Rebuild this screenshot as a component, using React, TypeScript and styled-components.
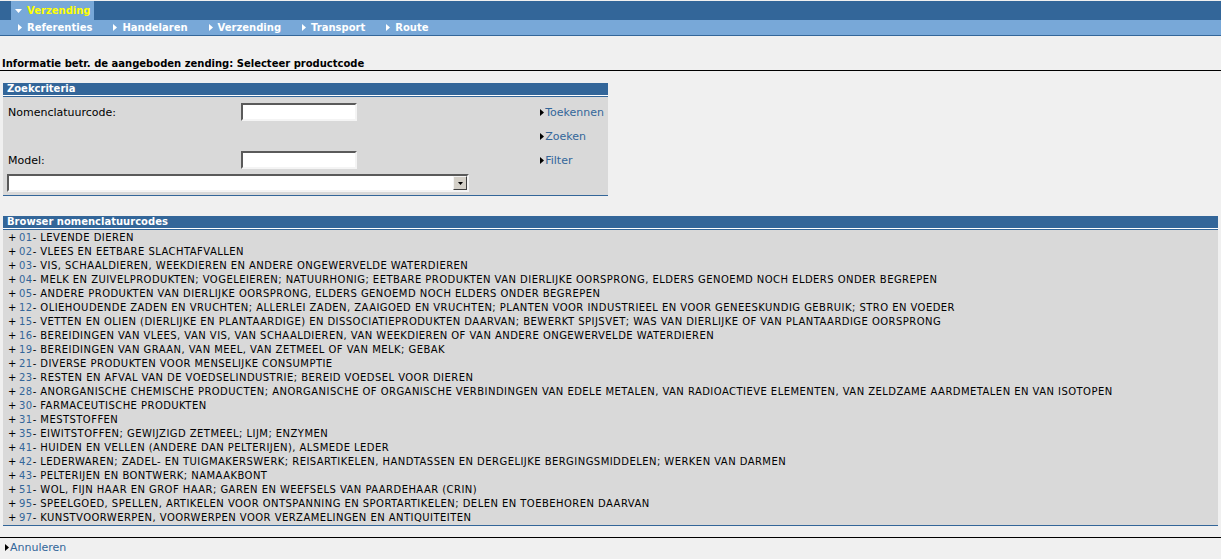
import React, { FC } from 'react';
import styled, { createGlobalStyle } from 'styled-components';

const GlobalStyle = createGlobalStyle`
	html, body {
		margin: 0;
		padding: 0;
		background: #f0f0f0;
		font-family: 'DejaVu Sans', Verdana, sans-serif;
		font-size: 11px;
		color: #000;
	}
`;

const blue = '#336699';
const lightBlue = '#78a8d8';

type Chapter = { code: string; label: string };

const chapters: Chapter[] = [
	{ code: '01', label: 'LEVENDE DIEREN' },
	{ code: '02', label: 'VLEES EN EETBARE SLACHTAFVALLEN' },
	{ code: '03', label: 'VIS, SCHAALDIEREN, WEEKDIEREN EN ANDERE ONGEWERVELDE WATERDIEREN' },
	{
		code: '04',
		label:
			'MELK EN ZUIVELPRODUKTEN; VOGELEIEREN; NATUURHONIG; EETBARE PRODUKTEN VAN DIERLIJKE OORSPRONG, ELDERS GENOEMD NOCH ELDERS ONDER BEGREPEN',
	},
	{ code: '05', label: 'ANDERE PRODUKTEN VAN DIERLIJKE OORSPRONG, ELDERS GENOEMD NOCH ELDERS ONDER BEGREPEN' },
	{
		code: '12',
		label:
			'OLIEHOUDENDE ZADEN EN VRUCHTEN; ALLERLEI ZADEN, ZAAIGOED EN VRUCHTEN; PLANTEN VOOR INDUSTRIEEL EN VOOR GENEESKUNDIG GEBRUIK; STRO EN VOEDER',
	},
	{
		code: '15',
		label:
			'VETTEN EN OLIEN (DIERLIJKE EN PLANTAARDIGE) EN DISSOCIATIEPRODUKTEN DAARVAN; BEWERKT SPIJSVET; WAS VAN DIERLIJKE OF VAN PLANTAARDIGE OORSPRONG',
	},
	{ code: '16', label: 'BEREIDINGEN VAN VLEES, VAN VIS, VAN SCHAALDIEREN, VAN WEEKDIEREN OF VAN ANDERE ONGEWERVELDE WATERDIEREN' },
	{ code: '19', label: 'BEREIDINGEN VAN GRAAN, VAN MEEL, VAN ZETMEEL OF VAN MELK; GEBAK' },
	{ code: '21', label: 'DIVERSE PRODUKTEN VOOR MENSELIJKE CONSUMPTIE' },
	{ code: '23', label: 'RESTEN EN AFVAL VAN DE VOEDSELINDUSTRIE; BEREID VOEDSEL VOOR DIEREN' },
	{
		code: '28',
		label:
			'ANORGANISCHE CHEMISCHE PRODUCTEN; ANORGANISCHE OF ORGANISCHE VERBINDINGEN VAN EDELE METALEN, VAN RADIOACTIEVE ELEMENTEN, VAN ZELDZAME AARDMETALEN EN VAN ISOTOPEN',
	},
	{ code: '30', label: 'FARMACEUTISCHE PRODUKTEN' },
	{ code: '31', label: 'MESTSTOFFEN' },
	{ code: '35', label: 'EIWITSTOFFEN; GEWIJZIGD ZETMEEL; LIJM; ENZYMEN' },
	{ code: '41', label: 'HUIDEN EN VELLEN (ANDERE DAN PELTERIJEN), ALSMEDE LEDER' },
	{
		code: '42',
		label:
			'LEDERWAREN; ZADEL- EN TUIGMAKERSWERK; REISARTIKELEN, HANDTASSEN EN DERGELIJKE BERGINGSMIDDELEN; WERKEN VAN DARMEN',
	},
	{ code: '43', label: 'PELTERIJEN EN BONTWERK; NAMAAKBONT' },
	{ code: '51', label: 'WOL, FIJN HAAR EN GROF HAAR; GAREN EN WEEFSELS VAN PAARDEHAAR (CRIN)' },
	{ code: '95', label: 'SPEELGOED, SPELLEN, ARTIKELEN VOOR ONTSPANNING EN SPORTARTIKELEN; DELEN EN TOEBEHOREN DAARVAN' },
	{ code: '97', label: 'KUNSTVOORWERPEN, VOORWERPEN VOOR VERZAMELINGEN EN ANTIQUITEITEN' },
];

const subMenu = ['Referenties', 'Handelaren', 'Verzending', 'Transport', 'Route'];

const Arrow: FC<{ color?: string }> = ({ color = '#000' }) => (
	<svg width="4" height="7" viewBox="0 0 4 7">
		<path d="M0 0 L4 3.5 L0 7 Z" fill={color} />
	</svg>
);

const App: FC = () => (
	<>
		<GlobalStyle />
		<Page>
			<TopBar>
				<Tab>
					<svg width="7" height="4" viewBox="0 0 7 4">
						<path d="M0 0 L7 0 L3.5 4 Z" fill="#fff" />
					</svg>
					<span>Verzending</span>
				</Tab>
			</TopBar>
			<SubBar>
				{subMenu.map((item) => (
					<SubItem key={item}>
						<Arrow color="#fff" />
						<span>{item}</span>
					</SubItem>
				))}
			</SubBar>

			<Title>Informatie betr. de aangeboden zending: Selecteer productcode</Title>

			<Panel width="605px" marginTop="12px">
				<PanelHeader>Zoekcriteria</PanelHeader>
				<SearchBody>
					<Label>Nomenclatuurcode:</Label>
					<TextInput type="text" />
					<Link>
						<Arrow />
						Toekennen
					</Link>
					<span />
					<span />
					<Link>
						<Arrow />
						Zoeken
					</Link>
					<Label>Model:</Label>
					<TextInput type="text" />
					<Link>
						<Arrow />
						Filter
					</Link>
					<SelectBox>
						<SelectButton>
							<svg width="5" height="3" viewBox="0 0 5 3">
								<path d="M0 0 L5 0 L2.5 3 Z" fill="#000" />
							</svg>
						</SelectButton>
					</SelectBox>
				</SearchBody>
			</Panel>

			<Panel width="1215px" marginTop="20px">
				<PanelHeader>Browser nomenclatuurcodes</PanelHeader>
				<TreeBody>
					{chapters.map((c) => (
						<TreeRow key={c.code}>
							<Plus>+</Plus>
							<Code>{c.code}</Code>- {c.label}
						</TreeRow>
					))}
				</TreeBody>
			</Panel>

			<Footer>
				<Link>
					<Arrow />
					Annuleren
				</Link>
			</Footer>
		</Page>
	</>
);

const Page = styled.div`
	padding-top: 1px;
	min-height: 558px;
`;

const TopBar = styled.div`
	display: flex;
	height: 19px;
	background: ${blue};
	padding-left: 11px;
`;

const Tab = styled.div`
	flex: 0 0 auto;
	display: flex;
	align-items: center;
	gap: 5px;
	box-sizing: border-box;
	width: 83px;
	height: 19px;
	padding-left: 4px;
	background: ${lightBlue};
	color: #ffff00;
	font-weight: bold;
	font-size: 10px;
`;

const SubBar = styled.div`
	display: flex;
	height: 15px;
	padding-left: 18px;
	gap: 21px;
	background: ${lightBlue};
	border-bottom: 1px solid ${blue};
`;

const SubItem = styled.div`
	display: flex;
	align-items: center;
	gap: 5px;
	color: #fff;
	font-weight: bold;
	font-size: 10px;
`;

const Title = styled.div`
	margin-top: 20px;
	padding: 1px 0 0 2px;
	line-height: 13px;
	font-weight: bold;
	font-size: 10px;
	border-bottom: 1px solid #000;
`;

const Panel = styled.div<{ width: string; marginTop: string }>`
	width: ${(p) => p.width};
	margin: ${(p) => p.marginTop} 0 0 3px;
	background: #d9d9d9;
	border-bottom: 1px solid ${blue};
`;

const PanelHeader = styled.div`
	height: 12px;
	line-height: 12px;
	padding-left: 4px;
	background: ${blue};
	color: #fff;
	font-weight: bold;
	font-size: 10px;
	border-bottom: 1px solid #fff;
	box-shadow: 0 1px 0 ${blue};
	margin-bottom: 1px;
`;

const SearchBody = styled.div`
	display: grid;
	grid-template-columns: 233px 1fr auto;
	grid-template-rows: 24px 24px 24px 20px;
	align-items: center;
	padding: 3px 4px 3px 5px;
`;

const Label = styled.span`
	font-size: 11px;
`;

const TextInput = styled.input`
	box-sizing: border-box;
	width: 116px;
	height: 18px;
	margin: 0;
	padding: 0 2px;
	background: #fff;
	border: 2px solid;
	border-color: #5a5a5a #f4f4f4 #f4f4f4 #5a5a5a;
	font-family: inherit;
	font-size: 11px;
	outline: none;
`;

const Link = styled.a`
	display: inline-flex;
	align-items: center;
	gap: 1px;
	color: ${blue};
	font-size: 11px;
	text-decoration: none;
	cursor: pointer;
`;

const SelectBox = styled.div`
	grid-column: 1 / -1;
	align-self: start;
	box-sizing: border-box;
	width: 462px;
	height: 18px;
	margin: 2px 0 0 -1px;
	display: flex;
	justify-content: flex-end;
	align-items: center;
	background: #fff;
	border: 2px solid;
	border-color: #5a5a5a #f4f4f4 #f4f4f4 #5a5a5a;
`;

const SelectButton = styled.div`
	box-sizing: border-box;
	width: 14px;
	height: 14px;
	display: flex;
	align-items: center;
	justify-content: center;
	background: #d4d0c8;
	border: 1px solid;
	border-color: #f4f4f4 #404040 #404040 #f4f4f4;
`;

const TreeBody = styled.div`
	padding: 1px 0 0 5px;
`;

const TreeRow = styled.div`
	height: 14px;
	line-height: 14px;
	font-size: 10px;
	letter-spacing: 0.45px;
	white-space: nowrap;
`;

const Plus = styled.span`
	display: inline-block;
	width: 11px;
`;

const Code = styled.span`
	color: ${blue};
`;

const Footer = styled.div`
	margin-top: 11px;
	border-top: 1px solid #000;
	width: 1218px;
	padding: 3px 0 0 5px;
`;

export default App;
